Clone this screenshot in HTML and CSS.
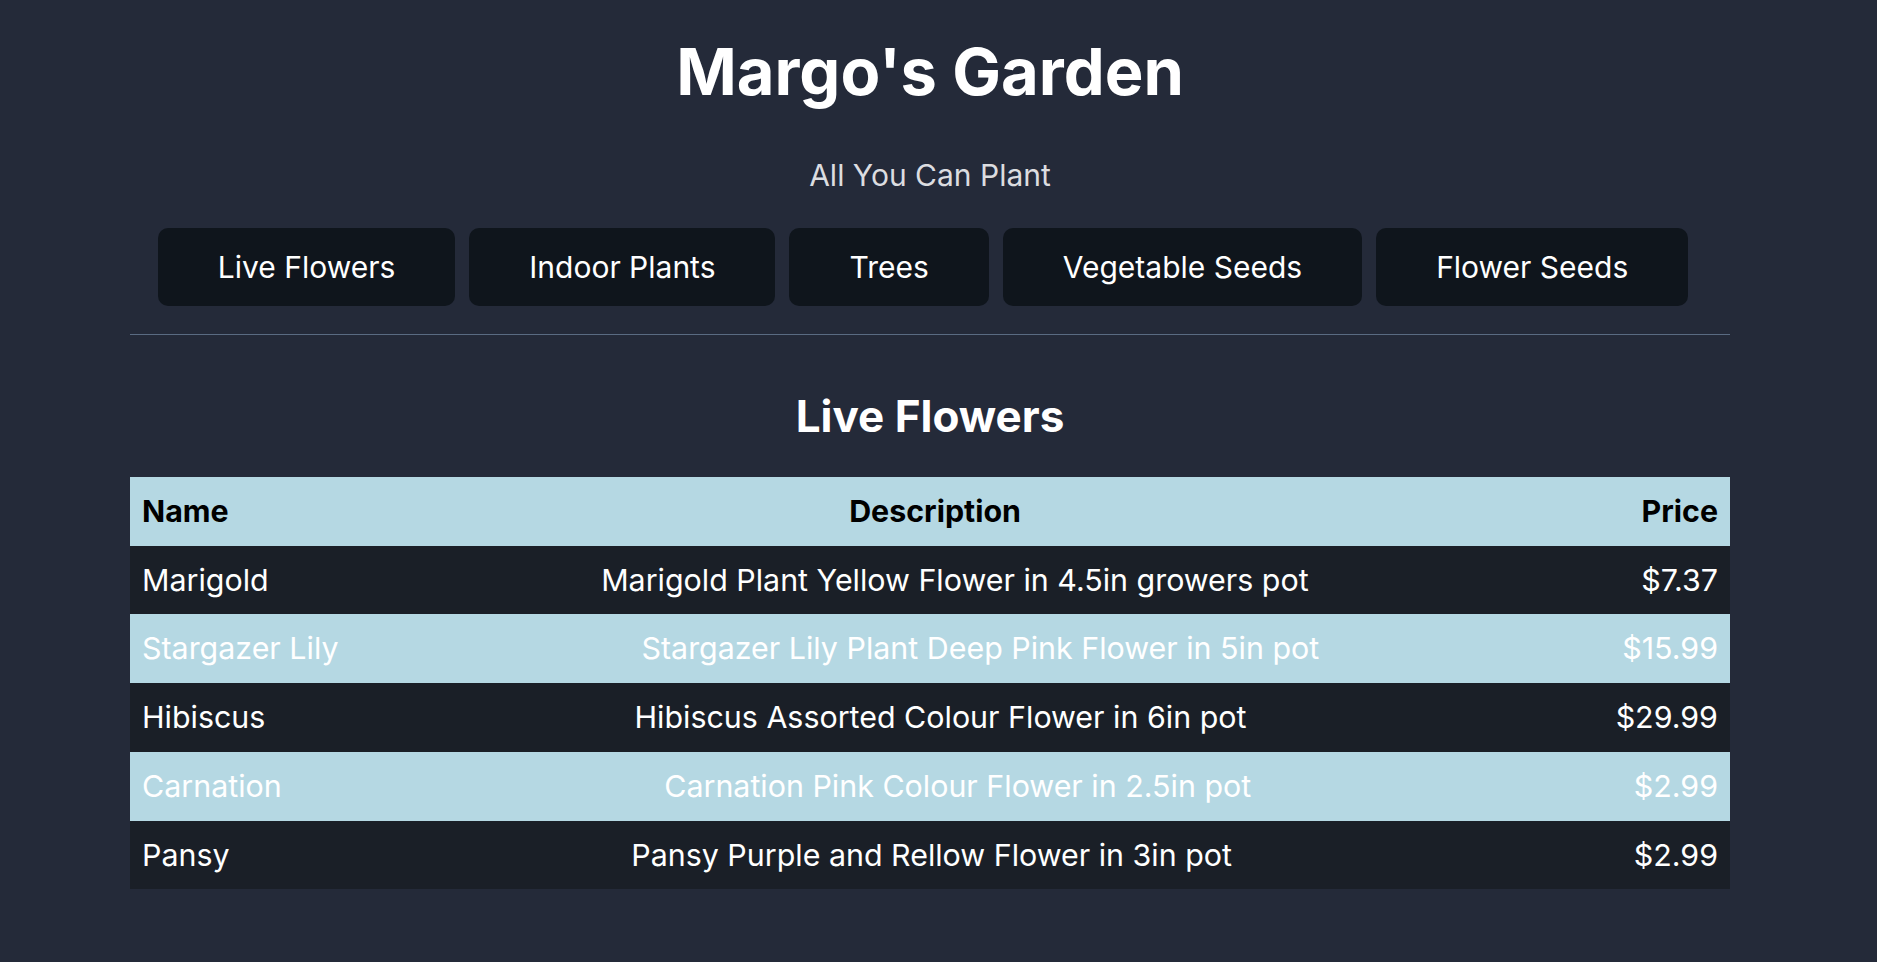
FILE: index.html
```html
<!DOCTYPE html>
<html lang="en">
<head>
<meta charset="utf-8">
<title>Margo's Garden</title>
<link rel="stylesheet" href="styles.css">
</head>
<body>
<div class="page">
  <header class="masthead">
    <h1 class="title">Margo's Garden</h1>
    <p class="tagline">All You Can Plant</p>
    <nav class="nav">
      <button class="nav-btn">Live Flowers</button>
      <button class="nav-btn">Indoor Plants</button>
      <button class="nav-btn">Trees</button>
      <button class="nav-btn">Vegetable Seeds</button>
      <button class="nav-btn">Flower Seeds</button>
    </nav>
  </header>
  <hr class="divider">
  <section class="catalog">
    <h2 class="section-title">Live Flowers</h2>
    <div class="list">
      <div class="row row-head"><span>Name</span><span>Description</span><span>Price</span></div>
      <div class="row row-dark"><span>Marigold</span><span>Marigold Plant Yellow Flower in 4.5in growers pot</span><span>$7.37</span></div>
      <div class="row row-light"><span>Stargazer Lily</span><span>Stargazer Lily Plant Deep Pink Flower in 5in pot</span><span>$15.99</span></div>
      <div class="row row-dark"><span>Hibiscus</span><span>Hibiscus Assorted Colour Flower in 6in pot</span><span>$29.99</span></div>
      <div class="row row-light"><span>Carnation</span><span>Carnation Pink Colour Flower in 2.5in pot</span><span>$2.99</span></div>
      <div class="row row-dark"><span>Pansy</span><span>Pansy Purple and Rellow Flower in 3in pot</span><span>$2.99</span></div>
    </div>
  </section>
</div>
</body>
</html>
```

FILE: styles.css
```css
html, body {
  margin: 0;
  background: #242a39;
}
body {
  padding: 0 17px 0 0;
  font-family: Inter, "Noto Sans", "Liberation Sans", sans-serif;
  color: #ffffff;
}
.page {
  width: 1600px;
  margin: 0 auto;
  padding-top: 33px;
}
.masthead {
  text-align: center;
}
.title {
  margin: 0;
  font-size: 65px;
  font-weight: 700;
  line-height: 77px;
}
.tagline {
  margin: 47px 0 0;
  font-size: 30px;
  line-height: 36px;
  color: #dcdde0;
}
.nav {
  display: flex;
  justify-content: center;
  gap: 14px;
  padding-right: 14px;
  margin-top: 35px;
}
.nav-btn {
  flex: none;
  white-space: nowrap;
  font-family: inherit;
  font-size: 30px;
  line-height: 36px;
  color: #ffffff;
  background: #0f151c;
  border: none;
  border-radius: 10px;
  padding: 21px 60px;
}
.divider {
  margin: 28px 0 0;
  border: none;
  height: 1px;
  background: #5a6b82;
}
.section-title {
  margin: 55px 0 0;
  text-align: center;
  font-size: 44px;
  font-weight: 700;
  line-height: 53px;
}
.list {
  margin-top: 34px;
}
.row {
  display: flex;
  justify-content: space-between;
  padding: 16px 12px;
  font-size: 30.4px;
  line-height: 36.7px;
}
.row-head {
  background: #b5d8e3;
  color: #000000;
  font-weight: 700;
}
.row-dark {
  background: #1a1f27;
}
.row-light {
  background: #b5d8e3;
  color: #ffffff;
}
```
